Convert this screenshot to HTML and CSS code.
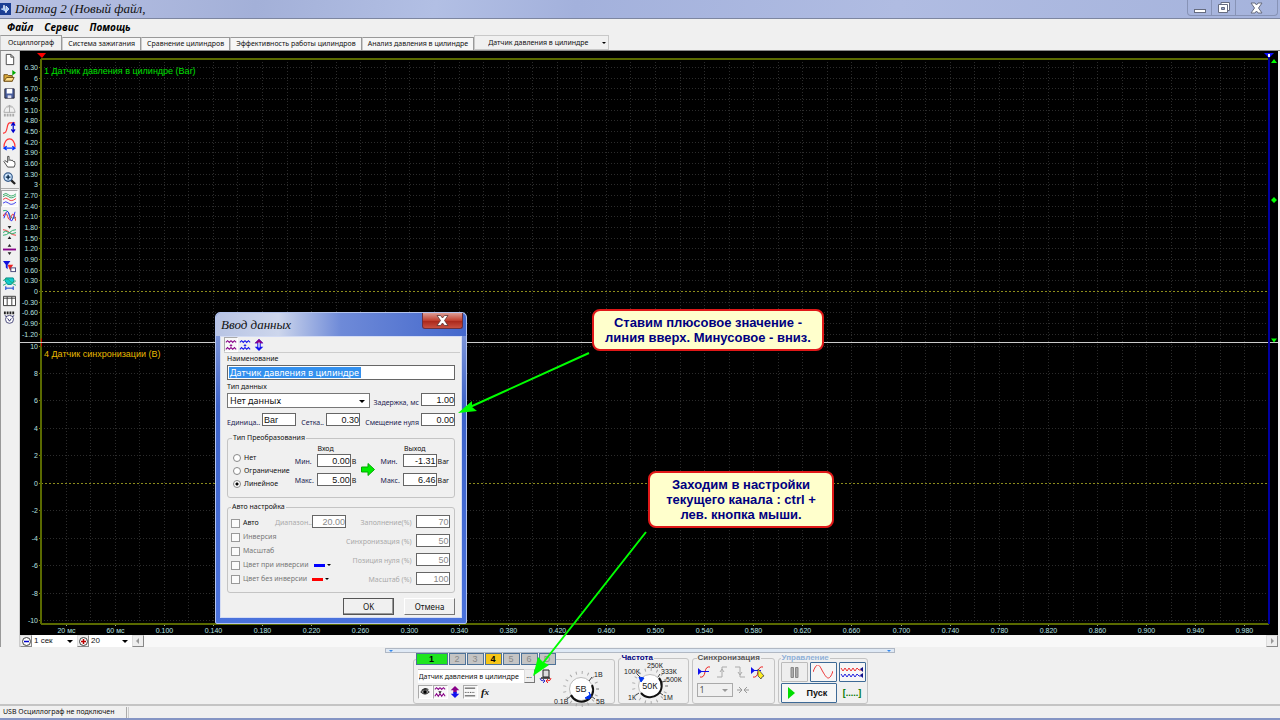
FILE: index.html
```html
<!DOCTYPE html>
<html lang="ru">
<head>
  <meta charset="UTF-8" />
  <meta name="viewport" content="width=device-width, initial-scale=1.0">
  <title>Diamag 2</title>
  <link rel="stylesheet" href="styles.css">
</head>
<body>
  <header class="titlebar">
    <svg class="app-icon" width="11" height="12" viewBox="0 0 11 12"><rect width="11" height="12" fill="#1c3f94"/><path d="M1 6h2l1-4 2 8V3l3 3-3 3" fill="#9cc8ff" stroke="#fff" stroke-width=".7"/></svg>
    <h1>Diamag 2 (Новый файл,</h1>
    <div class="window-buttons">
      <button aria-label="Свернуть"><svg width="14" height="12" viewBox="0 0 14 12"><rect x="1.500" y="7.500" width="11" height="3" fill="#fff" stroke="#666c80"/></svg></button>
      <button aria-label="Развернуть"><svg width="14" height="13" viewBox="0 0 14 13"><path d="M4 1.500h8.500v8H4z" fill="#fff" stroke="#666c80"/><path d="M1.500 3.500h9v8h-9z" fill="#fff" stroke="#666c80"/><path d="M4.500 6.500h3v2h-3z" fill="#9aa6cc" stroke="#666c80"/></svg></button>
      <button class="wide" aria-label="Закрыть"><svg width="13" height="12" viewBox="0 0 13 12"><path d="M1 1h4l1.500 2L8 1h4L8.500 6 12 11H8L6.500 9 5 11H1l3.500-5z" fill="#fff" stroke="#666c80"/></svg></button>
    </div>
  </header>

  <nav class="menu">
    <a href="#">Файл</a>
    <a href="#">Сервис</a>
    <a href="#">Помощь</a>
  </nav>

  <div class="tabs">
    <button class="tab active">Осциллограф</button>
    <button class="tab">Система зажигания</button>
    <button class="tab">Сравнение цилиндров</button>
    <button class="tab">Эффективность работы цилиндров</button>
    <button class="tab">Анализ давления в цилиндре</button>
    <span class="combo tab-combo">
      <select aria-label="Датчик"><option>Датчик давления в цилиндре</option></select>
    </span>
  </div>

  <main class="workspace">
    <div class="toolbar">
      <button aria-label="Новый"><svg viewBox="0 0 14 14"><path d="M3.500 1.500h5l3 3v8h-8z" fill="#fff" stroke="#444"/><path d="M8.500 1.500v3h3" fill="none" stroke="#444"/></svg></button>
      <button aria-label="Открыть"><svg viewBox="0 0 14 14"><path d="M1 12V5h4l1 1h4v6z" fill="#d9a93a" stroke="#6b4a12"/><path d="M1 12l3-4h8l-2 4z" fill="#ffe08a" stroke="#6b4a12"/><path d="M10 0l4 3-4 3z" fill="#0a0"/></svg></button>
      <button aria-label="Сохранить"><svg viewBox="0 0 14 14"><path d="M2 2h10v10H2z" fill="#4a5f9e" stroke="#223"/><path d="M4 2h6v5H4z" fill="#fff"/><path d="M5 9h4v3H5z" fill="#dde"/></svg></button>
      <button aria-label="Авто" disabled><svg viewBox="0 0 14 14"><path d="M1 9C2 4 4 2 7 2s5 2 6 7zM7 1v8M5 4l2-2 2 2" fill="none" stroke="#aaa"/><path d="M1 12h12" stroke="#aaa" stroke-width="3" stroke-dasharray="2 1"/></svg></button>
      <button aria-label="Амплитуда"><svg viewBox="0 0 14 14"><path d="M0 13c6 1 3-10 7-11h6" fill="none" stroke="#f33" stroke-width="1.300"/><path d="M11 2v10M9 5l2-3 2 3M9 9l2 3 2-3" fill="none" stroke="#00c" stroke-width="1.300"/></svg></button>
      <button aria-label="Период"><svg viewBox="0 0 14 14"><path d="M1 10C1 4 4 1 7 1s6 3 6 9" fill="none" stroke="#f33" stroke-width="1.300"/><path d="M1 11h12M4 9l-3 2 3 2M10 9l3 2-3 2" fill="none" stroke="#03f" stroke-width="1.300"/></svg></button>
      <button aria-label="Рука"><svg viewBox="0 0 14 14"><path d="M5 13L1 7l1-1 3 2V1.500h1.500V6l1-1 1 1 1.500-.500L11 7h1.500L13 10l-1 3z" fill="#fff" stroke="#333" stroke-width=".9"/></svg></button>
      <button aria-label="Увеличить"><svg viewBox="0 0 14 14"><path d="M8.500 8.500l4.500 4.500" stroke="#222" stroke-width="2.400"/><circle cx="5.500" cy="5.500" r="4.500" fill="#cfe7ff" stroke="#345a8a" stroke-width="1.300"/><path d="M3 5.500h5M5.500 3v5" stroke="#024" stroke-width="1.400"/></svg></button>
      <hr>
      <button class="pressed" aria-label="Все каналы"><svg viewBox="0 0 14 14" fill="none"><path d="M0 3q3-3 6 0t8-1M0 5q3-3 6 0t8-1" stroke="#3a6"/><path d="M0 8q3-3 6 0t8-1" stroke="#e33"/><path d="M0 12q3-3 6 0t8-1" stroke="#33e"/></svg></button>
      <button aria-label="Наложить"><svg viewBox="0 0 14 14" fill="none"><path d="M0 2q5-2 7 4t7 3" stroke="#2a7"/><path d="M0 8q3-7 5 0t4 0 5 5" stroke="#e22"/><path d="M1 10Q5-4 7 8T13 3" stroke="#22e"/></svg></button>
      <button aria-label="Сжать"><svg viewBox="0 0 14 14"><path d="M5 0h4L7 3zM5 14h4l-2-3z" fill="#222"/><path d="M0 4q4 0 7 3t7 3" fill="none" stroke="#e33"/><path d="M0 10q4 0 7-3t7-3M0 7q3-3 6 0t8 0" fill="none" stroke="#2a6"/></svg></button>
      <button aria-label="Разделить"><svg viewBox="0 0 14 14"><path d="M5 4l2-3 2 3zM5 10l2 3 2-3z" fill="#222"/><path d="M0 7h14" stroke="#808" stroke-width="2"/></svg></button>
      <button aria-label="Фильтр"><svg viewBox="0 0 14 14"><path d="M0 1h8L5 5v5L3 8V5z" fill="#11d"/><path d="M5 5h6L9 8v4L7 10z" fill="#e22"/><rect x="8.500" y="8.500" width="5" height="4" fill="#fff" stroke="#447"/></svg></button>
      <button aria-label="Развертка"><svg viewBox="0 0 14 14"><path d="M3 1h8l1 3-3 4H5L2 4z" fill="#1cc" stroke="#088"/><path d="M0 4q4-4 7 0t7 0M0 9l4-2M10 7l4 2" fill="none" stroke="#2a7"/><path d="M3 12h8M3 10v4M11 10v4" stroke="#03c"/></svg></button>
      <button aria-label="Таблица"><svg viewBox="0 0 14 14"><path d="M.500 2.500h13v10H.500z" fill="#fff" stroke="#333"/><path d="M1 4.500h12M4.500 3v9M9.500 3v9" stroke="#333"/></svg></button>
      <button aria-label="Авто настройка"><svg viewBox="0 0 14 14"><path d="M1 2h12" stroke="#222" stroke-width="3" stroke-dasharray="2 1"/><circle cx="7" cy="9" r="4.300" fill="#fff" stroke="#447"/><path d="M5 8l2 3 2-3M2 5l2 1M12 5l-2 1" fill="none" stroke="#226"/></svg></button>
    </div>

    <div class="scope-area">
      <div id="scope" class="scope"></div>
      <div class="scroll-row">
        <button class="mini" aria-label="Меньше"><svg width="9" height="9" viewBox="0 0 9 9"><circle cx="4.500" cy="4.500" r="4" fill="#fff" stroke="#444"/><path d="M2 4.500h5" stroke="#00c" stroke-width="1.500"/></svg></button>
        <span class="combo flat"><select aria-label="Время"><option>1 сек</option></select></span>
        <button class="mini" aria-label="Больше"><svg width="9" height="9" viewBox="0 0 9 9"><circle cx="4.500" cy="4.500" r="4" fill="#fff" stroke="#444"/><path d="M2 4.500h5M4.500 2v5" stroke="#b00" stroke-width="1.500"/></svg></button>
        <span class="combo flat step"><select aria-label="Шаг"><option>20</option></select></span>
        <button class="mini" aria-label="Влево"><svg width="4" height="6" viewBox="0 0 4 6"><path d="M3 0v6L0 3z" fill="#999"/></svg></button>
        <div class="track"></div>
        <button class="mini" aria-label="Вправо"><svg width="4" height="6" viewBox="0 0 4 6"><path d="M1 0v6l3-3z" fill="#999"/></svg></button>
      </div>
    </div>
  </main>

  <div class="splitter"><i></i><i></i></div>

  <section class="panel">
    <fieldset class="group channel-group">
      <legend class="channels">
        <button class="channel green">1</button>
        <button class="channel">2</button>
        <button class="channel">3</button>
        <button class="channel yellow">4</button>
        <button class="channel">5</button>
        <button class="channel">6</button>
        <button class="channel">D</button>
      </legend>
      <div class="channel-body">
        <div class="channel-left">
          <div class="sensor-row">
            <input class="sensor" type="text" value="Датчик давления в цилиндре" aria-label="Датчик канала">
            <button class="dots">...</button>
            <svg width="13" height="14" viewBox="0 0 13 14"><path d="M4 1h6v7H4z" fill="#ddd" stroke="#222"/><path d="M2 9h9" stroke="#222" stroke-width="1.500"/><path d="M1 9q0 3 4 3M4 10l2 2-2 2" stroke="#33c" fill="none"/><path d="M12 9q0 3-4 3M9 10l-2 2 2 2" stroke="#e22" fill="none"/></svg>
          </div>
          <div class="icon-row">
            <button class="pressed" aria-label="Показать"><svg viewBox="0 0 14 14"><path d="M2 7q5-6 10 0-5 5-10 0M3 5q4-4 8-1" fill="#999" stroke="#222"/><circle cx="7" cy="7" r="2"/></svg></button>
            <button class="pressed" aria-label="Сигнал"><svg viewBox="0 0 14 14" fill="none" stroke="#808"><path d="M1 4l2-2 2 2 2-2 2 2 2-2 2 2M1 12l2-3 2 3 2-3 2 3 2-3 2 3" stroke-width="1.200"/><path d="M5 6h4L7 9z" fill="#222" stroke="none"/></svg></button>
            <button aria-label="Сдвиг"><svg viewBox="0 0 14 14"><path d="M7 0l5 5H9v3H5V5H2z" fill="#808"/><path d="M7 14l5-5H9V7H5v2H2z" fill="#11e"/></svg></button>
            <button class="pressed" aria-label="Линии"><svg viewBox="0 0 14 14" stroke="#222"><path d="M1 2.500h12M1 11.500h12"/><path d="M1 7.500h12" stroke-dasharray="1 1"/></svg></button>
            <button class="fx" aria-label="Функция">f<small>x</small></button>
          </div>
        </div>
        <div class="dial dial-volt">
          <svg viewBox="0 0 60 46">
            <circle cx="28" cy="28" r="16.500" class="ticks"/>
            <circle cx="28" cy="28" r="11.500" class="knob"/>
            <path d="M18 34A11.500 11.500 0 0 0 39 24" class="knob-shade"/>
            <path d="M32 37l5-3-1-3 2 4-2 3z" class="pointer"/>
            <path d="M14 38l4-3M42 38l-4-3M39 16l-3 4" class="leads"/>
            <text x="28" y="31" class="dial-value">5В</text>
            <text x="41" y="16">1В</text><text x="43" y="43">5В</text><text x="1" y="43">0.1В</text>
          </svg>
        </div>
      </div>
    </fieldset>

    <fieldset class="group freq-group">
      <legend>Частота</legend>
      <div class="dial">
        <svg viewBox="0 0 66 43">
          <circle cx="31" cy="24" r="16.500" class="ticks"/>
          <circle cx="31" cy="24" r="11.500" class="knob"/>
          <path d="M22 31A11.500 11.500 0 0 0 40 16" class="knob-shade"/>
          <path d="M20 15l5 1-3 4z" class="pointer"/>
          <path d="M18 12l3 3M41 12l-2 3M47 19l-4 1M17 33l3-2M44 33l-3-2" class="leads"/>
          <text x="31" y="27" class="dial-value">50К</text>
          <text x="28" y="6">250К</text><text x="5" y="12">100К</text><text x="42" y="12">333К</text><text x="47" y="20">500К</text><text x="9" y="38">1К</text><text x="44" y="38">1М</text>
        </svg>
      </div>
    </fieldset>

    <fieldset class="group sync-group">
      <legend>Синхронизация</legend>
      <div class="sync-icons">
        <button aria-label="Уровень"><svg viewBox="0 0 14 14"><path d="M3 12q4 1 5-5t5-5" fill="none" stroke="#e22"/><path d="M1 3v7l4-3.500z" fill="#11e"/><path d="M1 6.500h11" stroke="#11e"/></svg></button>
        <button aria-label="Фронт" disabled><svg viewBox="0 0 14 14"><path d="M2 12h5V2h5M5 7l2-3 2 3" fill="none" stroke="#aaa"/></svg></button>
        <button aria-label="Спад" disabled><svg viewBox="0 0 14 14"><path d="M2 2h5v10h5M5 7l2 3 2-3" fill="none" stroke="#aaa"/></svg></button>
        <button aria-label="Выбор"><svg viewBox="0 0 14 14"><path d="M2 12q4 1 5-5t5-5" fill="none" stroke="#e22"/><path d="M0 2v7l4-3.500z" fill="#11e"/><path d="M1 5.500h9" stroke="#11e"/><path d="M7 4l6 7-2 1-1 2-3-3z" fill="#fe2" stroke="#333" stroke-width=".7"/></svg></button>
      </div>
      <div class="sync-row">
        <span class="combo disabled"><select aria-label="Канал синхронизации" disabled><option>1</option></select></span>
        <svg width="12" height="8" viewBox="0 0 12 8"><path d="M0 4h5M2 1l3 3-3 3M12 4H7M10 1L7 4l3 3" fill="none" stroke="#999"/></svg>
      </div>
    </fieldset>

    <fieldset class="group control-group">
      <legend>Управление</legend>
      <div class="controls">
        <button class="key off" aria-label="Пауза"><svg width="9" height="11" viewBox="0 0 9 11"><path d="M1 .500h2.500v10H1zM5.500.500H8v10H5.500z" fill="#aaa" stroke="#888"/></svg></button>
        <button class="key" aria-label="Синус"><svg width="20" height="14" viewBox="0 0 20 14"><path d="M0 7C5-6 7 2 10 7s6 11 10-1" fill="none" stroke="#e33"/></svg></button>
        <button class="key" aria-label="Поток"><svg width="24" height="14" viewBox="0 0 24 14" fill="none"><path d="M1 3l2 3 2-3 2 3 2-3 2 3 2-3 2 3 2-3 2 2h3" stroke="#e33"/><path d="M1 9l2 3 2-3 2 3 2-3 2 3 2-3 2 3 2-3 2 2h3" stroke="#22d"/><path d="M23 2v5l-3-3zM23 8v5l-3-3z" fill="#118"/></svg></button>
        <button class="key start"><svg width="8" height="12" viewBox="0 0 8 12"><path d="M0 0l7 6-7 6z" fill="#0d0"/></svg>Пуск</button>
        <span class="brackets">[.....]</span>
      </div>
    </fieldset>
  </section>

  <footer class="statusbar">
    <span class="status-text">USB Осциллограф не подключен</span>
    <span class="status-rest"></span>
  </footer>
  <div class="window-edge"></div>

  <form class="dialog">
    <div class="dialog-title">
      <h2>Ввод данных</h2>
      <button type="button" class="dialog-close" aria-label="Закрыть"><svg width="13" height="11" viewBox="0 0 13 11"><path d="M1 .500h3.500l2 2.500 2-2.500H12L8.500 5.500l3.500 5H8.500l-2-2.500-2 2.500H1l3.500-5z" fill="#fff" stroke="#5a3434" stroke-width=".8"/></svg></button>
    </div>
    <div class="dialog-body">
      <div class="dialog-tools">
        <button type="button" class="pressed" aria-label="Сигнал"><svg viewBox="0 0 14 14" fill="none" stroke="#808"><path d="M1 4l2-2 2 2 2-2 2 2 2-2 2 2M1 12l2-2 2 2 2-2 2 2 2-2 2 2" stroke-width="1.200"/><path d="M7 6v3M5.500 7.500h3"/></svg></button>
        <button type="button" aria-label="Сигнал 2"><svg viewBox="0 0 14 14" fill="none" stroke="#11e"><path d="M1 4l2-2 2 2 2-2 2 2 2-2 2 2M1 12l2-2 2 2 2-2 2 2 2-2 2 2" stroke-width="1.200"/><path d="M7 6v3M5.500 7.500h3"/></svg></button>
        <button type="button" aria-label="Сдвиг"><svg viewBox="0 0 14 14"><path d="M7 0l5 5H9v4h3l-5 5-5-5h3V5H2z" fill="#11e"/><path d="M7 0l5 5H2z" fill="#808"/><path d="M7 4v6" stroke="#fff" stroke-width="1.500"/></svg></button>
      </div>

      <label class="caption" for="name">Наименование</label>
      <div class="name-field"><input id="name" type="text" value=""><mark>Датчик давления в цилиндре</mark></div>

      <label class="caption" for="type">Тип данных</label>
      <div class="row type-row">
        <span class="combo"><select id="type"><option>Нет данных</option></select></span>
        <label class="blue push" for="delay">Задержка, мс</label>
        <input class="num" id="delay" type="text" value="1.00">
      </div>
      <div class="row unit-row">
        <label class="blue" for="unit">Единица..</label>
        <input class="unit" id="unit" type="text" value="Bar">
        <label class="blue push" for="grid">Сетка..</label>
        <input class="num" id="grid" type="text" value="0.30">
        <label class="blue push" for="zero">Смещение нуля</label>
        <input class="num" id="zero" type="text" value="0.00">
      </div>

      <fieldset class="convert">
        <legend>Тип Преобразования</legend>
        <div class="radios">
          <label><input type="radio" name="conv">Нет</label>
          <label><input type="radio" name="conv">Ограничение</label>
          <label><input type="radio" name="conv" checked>Линейное</label>
        </div>
        <div class="range">
          <span class="head">Вход</span>
          <label class="blue" for="inmin">Мин.</label><input class="num" id="inmin" type="text" value="0.00"><span>В</span>
          <label class="blue" for="inmax">Макс.</label><input class="num" id="inmax" type="text" value="5.00"><span>В</span>
        </div>
        <svg class="go" width="14" height="13" viewBox="0 0 14 13"><path d="M.500 4H7V.500l6.500 6-6.500 6V9H.500z" fill="#0e0" stroke="#0a0"/></svg>
        <div class="range">
          <span class="head">Выход</span>
          <label class="blue" for="outmin">Мин.</label><input class="num" id="outmin" type="text" value="-1.31"><span>Bar</span>
          <label class="blue" for="outmax">Макс.</label><input class="num" id="outmax" type="text" value="6.46"><span>Bar</span>
        </div>
      </fieldset>

      <fieldset class="auto">
        <legend>Авто настройка</legend>
        <div class="checks">
          <div class="check-row">
            <label class="dark"><input type="checkbox">Авто</label>
            <label class="dim push" for="span">Диапазон..</label>
            <input class="num" id="span" type="text" value="20.00" disabled>
          </div>
          <label><input type="checkbox" disabled>Инверсия</label>
          <label><input type="checkbox" disabled>Масштаб</label>
          <label><input type="checkbox" disabled>Цвет при инверсии<i class="swatch blue-line"></i></label>
          <label><input type="checkbox" disabled>Цвет без инверсии<i class="swatch red-line"></i></label>
        </div>
        <div class="percents">
          <label for="fill">Заполнение(%)</label><input class="num" id="fill" type="text" value="70" disabled>
          <label for="sync">Синхронизация (%)</label><input class="num" id="sync" type="text" value="50" disabled>
          <label for="pos">Позиция нуля (%)</label><input class="num" id="pos" type="text" value="50" disabled>
          <label for="scale">Масштаб (%)</label><input class="num" id="scale" type="text" value="100" disabled>
        </div>
      </fieldset>

      <div class="dialog-buttons">
        <button type="button" class="default">OK</button>
        <button type="button">Отмена</button>
      </div>
    </div>
  </form>

  <div class="callout callout-zero">Ставим плюсовое значение - линия вверх. Минусовое - вниз.</div>
  <div class="callout callout-channel">Заходим в настройки текущего канала : ctrl + лев. кнопка мыши.</div>
  <svg class="pointers">
    <path d="M589 353L470 407M646 532L543 663" stroke="#0f0" stroke-width="2"/>
    <path d="M458 413l14-12 0 6 5 4zM533 676l5-19 5 5 6 3z" fill="#0f0"/>
  </svg>

  <script src="scope.js"></script>
</body>
</html>
```
FILE: styles.css
```css
* {
  box-sizing: border-box;
}

body {
  margin: 0;
  min-height: 100vh;
  display: flex;
  flex-direction: column;
  position: relative;
  background: #f0f0f0;
  color: #111;
  font-family: "Noto Sans", "Liberation Sans", sans-serif;
  font-size: 7px;
  line-height: 10px;
}

button,
input,
select {
  font: inherit;
  color: inherit;
  margin: 0;
  padding: 0;
  border: 0;
  border-radius: 0;
  background: none;
}

button {
  display: flex;
  align-items: center;
  justify-content: center;
}

button,
label {
  white-space: nowrap;
}

svg {
  display: block;
  flex: none;
}

fieldset {
  margin: 0;
  padding: 0;
  min-width: 0;
  border: 1px solid #c4c4c4;
  border-radius: 3px;
}

/* title bar */
.titlebar {
  height: 19px;
  display: flex;
  align-items: center;
  padding: 0 2px 0 0;
  gap: 4px;
  background: linear-gradient(100deg, #b9c2e4, #a3b0d8 20%, #b2bfe4 34%, #a3b1dc 45%, #b0bce2 70%, #a5b3dc);
  border-bottom: 1px solid #7d86a0;
}

.titlebar h1 {
  margin: 0;
  flex: 1;
  font: italic 13px/18px "Liberation Serif", serif;
}

.window-buttons {
  display: flex;
  align-self: flex-start;
  height: 16px;
  border: 1px solid #8793b6;
  border-top: 0;
  border-radius: 0 0 4px 4px;
}

.window-buttons button {
  width: 24px;
  border-right: 1px solid #8793b6;
}

.window-buttons .wide {
  width: 41px;
  border: 0;
}

/* menu and tabs */
.menu {
  height: 16px;
  display: flex;
  gap: 11px;
  padding: 0 7px;
}

.menu a {
  color: #000;
  text-decoration: none;
  font: italic bold 10px/16px "Open Sans", sans-serif;
}

.tabs {
  height: 16px;
  display: flex;
  align-items: flex-end;
  border-bottom: 1px solid #8a8a8a;
}

.tab {
  height: 13px;
  padding: 0 5px;
  background: #f6f6f6;
  border: 1px solid #999;
  border-bottom: 0;
  border-left-color: #ccc;
}

.tab.active {
  height: 15px;
  padding: 0 7px;
  background: #f0f0f0;
}

.combo {
  position: relative;
  display: flex;
  background: #fff;
  border: 1px solid #777;
}

.combo select {
  appearance: none;
  flex: 1;
  width: 100%;
  padding: 0 2px;
}

.combo::after {
  content: "";
  position: absolute;
  right: 4px;
  top: 50%;
  margin-top: -1px;
  border: 3px solid transparent;
  border-top-color: #000;
  border-bottom: 0;
}

.tab-combo {
  width: 135px;
  height: 15px;
  background: #f0f0f0;
  border-color: #c8c8c8;
}

.tab-combo::after {
  right: 2px;
  border-width: 2px 2px 0;
}

.tab-combo select {
  padding-left: 13px;
}

/* workspace */
.workspace {
  flex: 1;
  display: flex;
  padding-right: 2px;
  border-left: 1px solid #999;
}

.toolbar {
  width: 19px;
  border-right: 1px solid #ccc;
}

.toolbar button {
  width: 17px;
  height: 17px;
}

.toolbar svg {
  width: 13px;
  height: 13px;
}

.toolbar hr {
  margin: 1px 0;
  border: 0;
  border-top: 1px solid #aaa;
}

.pressed {
  background: #f8f8f8;
  border: 1px solid #aaa;
  border-right-color: #fff;
  border-bottom-color: #fff;
}

.scope-area {
  flex: 1;
  min-width: 0;
  display: flex;
  flex-direction: column;
}

.scope {
  flex: 1;
  min-height: 500px;
  position: relative;
  background: #000;
}

.scope svg {
  position: absolute;
  inset: 0;
  width: 100%;
  height: 100%;
}

.scope text {
  font: 7px "Liberation Sans", sans-serif;
  fill: #b8e0e0;
}

.scope .channel-name {
  font-size: 9px;
}

.scope .grid {
  stroke: #2c2c2c;
  stroke-dasharray: 1 2;
}

.scope .zero {
  stroke: #8c8c1c;
  stroke-dasharray: 2 2;
}

.scroll-row {
  height: 12px;
  display: flex;
  background: #f8f8f8;
  font-family: "Liberation Sans", sans-serif;
  font-size: 8px;
}

.scroll-row .combo {
  width: 45px;
  border: 0;
}

.scroll-row .step {
  width: 43px;
}

.mini {
  width: 12px;
  background: #eee;
  border: 1px solid #ddd;
  border-right-color: #888;
  border-bottom-color: #888;
}

.track {
  flex: 1;
}

.splitter {
  width: 510px;
  max-width: 100%;
  height: 5px;
  margin: 1px auto 0;
  display: flex;
  align-items: center;
  justify-content: space-between;
  background: #dfe9f5;
  border: 1px solid #b0b8c4;
}

.splitter i {
  border: 2px solid transparent;
  border-top-color: #38e;
  border-bottom: 0;
  margin: 0 3px;
}

/* bottom panel */
.panel {
  height: 53px;
  display: flex;
  justify-content: center;
  align-items: flex-end;
  gap: 3px;
  border-bottom: 2px solid #c4c4c4;
}

.group {
  height: 50px;
}

.group legend {
  margin-left: 2px;
  padding: 0 1px;
  font: bold 8px/8px "Liberation Sans", sans-serif;
}

.channel-group {
  width: 202px;
  height: 51px;
}

.group .channels {
  display: flex;
  gap: 1px;
  padding: 0;
}

.channel {
  width: 17px;
  height: 12px;
  background: #c4c4c4;
  border: 1px solid #4e7298;
  color: #888;
  font-size: 9px;
  font-weight: normal;
}

.channel.green {
  width: 32px;
  background: #1ee51e;
  color: #000;
  font-weight: bold;
}

.channel.yellow {
  background: #f5c518;
  color: #000;
  font-weight: bold;
}

.channel-body {
  display: flex;
}

.channel-left {
  width: 139px;
  padding: 4px 0 0 4px;
}

.sensor-row,
.icon-row {
  display: flex;
  height: 14px;
  margin-bottom: 2px;
}

.sensor {
  width: 106px;
  flex: none;
  padding: 0 1px;
  background: #fff;
  border-top: 1px solid #bbb;
}

.dots {
  width: 11px;
  margin-right: 4px;
  background: #eee;
  border: 1px solid #ddd;
  border-right-color: #777;
  border-bottom-color: #777;
}

.icon-row button {
  width: 15px;
}

.icon-row svg {
  width: 12px;
  height: 12px;
}

.icon-row .fx {
  font: italic bold 11px "Liberation Serif", serif;
}

.dial {
  overflow: visible;
}

.dial svg {
  width: 66px;
  height: 43px;
  overflow: visible;
}

.dial-volt svg {
  width: 60px;
  height: 46px;
  margin-top: -4px;
}

.dial text {
  font: 7px "Liberation Sans", sans-serif;
  fill: #222;
}

.dial .dial-value {
  font-size: 9px;
  text-anchor: middle;
}

.ticks {
  fill: none;
  stroke: #aaa;
  stroke-width: 3;
  stroke-dasharray: 1 5;
}

.knob {
  fill: #fff;
  stroke: #bbb;
}

.knob-shade {
  fill: none;
  stroke: #111;
  stroke-width: 2;
}

.pointer {
  fill: #03e;
  stroke: #03e;
}

.leads {
  stroke: #444;
}

.freq-group {
  width: 71px;
}

.freq-group legend {
  color: #000080;
}

.sync-group {
  width: 83px;
  padding-left: 4px;
}

.group.sync-group legend,
.group.control-group legend {
  margin-left: 0;
  color: #555;
}

.sync-icons {
  display: flex;
  gap: 4px;
  padding-top: 3px;
}

.sync-icons svg {
  width: 14px;
  height: 14px;
}

.sync-row {
  display: flex;
  align-items: center;
  gap: 4px;
  padding-top: 4px;
}

.sync-row .combo {
  width: 36px;
  height: 14px;
  font-size: 9px;
}

.combo.disabled {
  background: #f0f0f0;
  border-color: #aaa;
}

.combo.disabled::after {
  border-top-color: #999;
}

.combo select:disabled {
  opacity: 1;
  color: #555;
}

.control-group {
  width: 90px;
  padding-left: 2px;
}

.group.control-group legend {
  color: #8fb0d8;
}

.controls {
  display: grid;
  grid-template-columns: 27px 27px 27px;
  gap: 1px 2px;
}

.key {
  height: 20px;
  background: #f6f6f6;
  border: 1px solid #3e6a96;
  border-radius: 1px;
}

.key.off {
  background: #eee;
  border-color: #bbb;
}

.start {
  grid-column: span 2;
  justify-content: flex-start;
  gap: 11px;
  padding-left: 6px;
  font: bold 9px "Liberation Sans", sans-serif;
}

.brackets {
  align-self: center;
  justify-self: center;
  color: #070;
  font: bold 9px "Liberation Sans", sans-serif;
}

/* status bar */
.statusbar {
  height: 12px;
  display: flex;
  gap: 1px;
  padding-top: 1px;
}

.status-text {
  width: 127px;
  padding-left: 3px;
  white-space: nowrap;
  border-right: 1px solid #aaa;
}

.status-rest {
  flex: 1;
  border-left: 1px solid #ccc;
}

.window-edge {
  height: 2px;
  background: #8595c4;
}

/* settings dialog */
.dialog {
  position: absolute;
  left: 215px;
  top: 312px;
  width: 252px;
  padding: 0 4px 5px;
  background: linear-gradient(#90a4dc, #3c62c8 30%, #4a72dc);
  border: 1px solid #b4c4ee;
  border-radius: 5px 5px 2px 2px;
}

.dialog-title {
  height: 23px;
  margin: 0 -4px;
  padding: 0 3px 0 5px;
  display: flex;
  align-items: center;
  justify-content: space-between;
  border-radius: 5px 5px 0 0;
  background: linear-gradient(90deg, #b8c4e4, #cdd6ec 25%, #6e8ad8 50%, #4468cc);
}

.dialog-title h2 {
  margin: 0;
  font: italic 13px/22px "Liberation Serif", serif;
}

.dialog-close {
  align-self: flex-start;
  width: 41px;
  height: 16px;
  background: linear-gradient(#dc9c94, #c04030 50%, #a82418 50%, #c85040);
  border: 1px solid #6a3040;
  border-top: 0;
  border-radius: 0 0 3px 3px;
}

.dialog-body {
  padding: 0 6px 2px;
  background: #f0f0f0;
  border: 1px solid #d4dcf4;
}

.dialog-tools {
  display: flex;
  margin: 0 -5px 1px -3px;
  border-bottom: 1px solid #ccc;
}

.dialog-tools button {
  width: 14px;
  height: 15px;
}

.dialog-tools svg {
  width: 12px;
  height: 12px;
}

.caption {
  display: block;
  height: 11px;
}

.dialog input[type="text"] {
  height: 13px;
  background: #fff;
  border: 1px solid #666;
}

.name-field {
  position: relative;
  margin-bottom: 2px;
}

.dialog .name-field input {
  display: block;
  width: 100%;
  height: 15px;
}

.name-field mark {
  position: absolute;
  left: 2px;
  top: 2px;
  padding: 0 2px 0 1px;
  color: #fff;
  background: #3390ee;
  font-size: 9px;
  line-height: 11px;
}

.row {
  display: flex;
  align-items: flex-start;
}

.blue {
  color: #1c1c50;
}

.num,
.unit {
  width: 34px;
  flex: none;
}

.dialog .num,
.dialog .unit {
  font: 9px "Liberation Sans", sans-serif;
}

.num {
  text-align: right;
}

.type-row .combo {
  width: 143px;
  height: 15px;
  font-size: 9px;
}

.unit-row {
  height: 15px;
  margin: 5px 0;
}

.dialog .unit {
  height: 15px;
  padding-left: 1px;
}

.push {
  margin-left: auto;
}

.unit-row .blue,
.type-row .blue {
  padding: 5px 2px 0 0;
}

.convert {
  height: 65px;
  padding: 0 5px;
  display: flex;
  justify-content: space-between;
  align-items: flex-start;
}

.convert legend,
.auto legend {
  margin-left: -1px;
  padding: 0 1px;
}

.auto legend {
  margin-left: 0;
}

.radios {
  display: flex;
  flex-direction: column;
  gap: 3px;
  padding-top: 10px;
}

.radios label,
.checks label {
  display: flex;
  align-items: center;
  gap: 3px;
}

.radios input {
  appearance: none;
  width: 8px;
  height: 8px;
  background: #fff;
  border: 1px solid #888;
  border-radius: 50%;
}

.radios input:checked {
  background: radial-gradient(#000 0 1px, #fff 2px);
}

.range {
  display: grid;
  grid-template-columns: 21px 34px auto;
  align-items: end;
  column-gap: 1px;
  row-gap: 6px;
  padding-top: 1px;
}

.range .head {
  grid-column: 1 / -1;
  text-align: center;
  height: 10px;
  margin-bottom: -6px;
}

.go {
  margin-top: 20px;
}

.auto {
  height: 91px;
  margin-top: 4px;
  padding: 3px 8px 0 3px;
  display: flex;
  justify-content: space-between;
  color: #777;
}

.auto legend,
.auto .dark {
  color: #111;
}

.checks {
  width: 115px;
  flex: none;
  display: flex;
  flex-direction: column;
  gap: 4px;
}

.check-row {
  display: flex;
  align-items: flex-end;
  height: 13px;
}

.checks input[type="checkbox"] {
  appearance: none;
  width: 9px;
  height: 9px;
  background: #fbfbfb;
  border: 1px solid #999;
}

.auto input[type="text"] {
  color: #888;
}

.dim,
.percents {
  color: #aaa;
}

.percents {
  display: grid;
  grid-template-columns: auto 34px;
  grid-auto-rows: 13px;
  gap: 6px 4px;
  text-align: right;
  align-items: end;
}

.swatch {
  position: relative;
  width: 11px;
  height: 3px;
  margin-left: 2px;
}

.swatch::after {
  content: "";
  position: absolute;
  left: 13px;
  top: 0;
  border: 2px solid transparent;
  border-top-color: #000;
  border-bottom: 0;
}

.blue-line {
  background: #00f;
}

.red-line {
  background: #f00;
}

.dialog-buttons {
  display: flex;
  justify-content: flex-end;
  gap: 10px;
  margin-top: 5px;
}

.dialog-buttons button {
  width: 51px;
  height: 17px;
  font-size: 8px;
  border: 1px solid #fff;
  border-right-color: #777;
  border-bottom-color: #777;
}

.dialog-buttons .default {
  border: 1px solid #555;
  box-shadow: inset -1px -1px #999;
}

/* callouts */
.callout {
  position: absolute;
  padding: 4px 8px;
  background: #ffffcc;
  border: 2px solid #e01818;
  border-radius: 8px;
  color: #000080;
  text-align: center;
  font: bold 13px/15px "Liberation Sans", sans-serif;
}

.callout-zero {
  left: 592px;
  top: 309px;
  width: 232px;
}

.callout-channel {
  left: 648px;
  top: 471px;
  width: 186px;
}

.pointers {
  position: absolute;
  inset: 0;
  width: 100%;
  height: 100%;
  pointer-events: none;
}
```
FILE: scope.js
```javascript
const scope = document.getElementById("scope");

// margins around the plot
const LEFT = 21;
const RIGHT = 9;
const TOP = 8;
const BOTTOM = 11;

function line(x1, y1, x2, y2, attrs) {
  return `<line x1="${x1}" y1="${y1}" x2="${x2}" y2="${y2}" ${attrs}/>`;
}

function label(x, y, text, attrs = "") {
  return `<text x="${x}" y="${y}" ${attrs}>${text}</text>`;
}

function axisRow(x, y, text, isZero) {
  const px = Math.round(y) + 0.5;
  return line(LEFT, px, x, px, `class="${isZero ? "zero" : "grid"}"`)
    + line(LEFT - 2, px, LEFT, px, 'stroke="#7a8c00"')
    + label(LEFT - 3, px + 2, text, 'text-anchor="end"');
}

function drawScope() {
  const w = scope.clientWidth;
  const h = scope.clientHeight;
  const right = w - RIGHT;
  const bottom = h - BOTTOM;
  const split = Math.round(TOP + (bottom - TOP) / 2) + 0.5;
  let out = "";

  // time axis, one grid line each 20 ms
  for (let i = 1; i < 50; i++) {
    const x = Math.round(LEFT + (right - LEFT) * i / 50) + 0.5;
    out += line(x, TOP + 3, x, bottom, 'class="grid"');
    if (i % 2 === 1) {
      const text = i < 4 ? `${i * 20} мс` : (i * 0.02).toFixed(3);
      out += line(x, bottom, x, bottom + 2, 'stroke="#9a9"');
      out += label(x, h - 2, text, 'text-anchor="middle"');
    }
  }

  // channel 1
  const unit1 = (split - TOP - 17) / 7.5;
  for (let i = 21; i >= -4; i--) {
    const v = i * 0.3;
    const text = i % 10 === 0 ? v.toFixed(0) : v.toFixed(2);
    out += axisRow(right, TOP + 8 + (6.3 - v) * unit1, text, i === 0);
  }

  // channel 4
  const unit4 = (bottom - split - 7) / 20;
  for (let v = 10; v >= -10; v -= 2) {
    out += axisRow(right, split + 3 + (10 - v) * unit4, v, v === 0);
  }

  const olive = 'stroke="#5a6a00" stroke-width="2"';
  out += line(LEFT, TOP, right, TOP, olive);
  out += line(LEFT, bottom, right, bottom, olive);
  out += line(LEFT, TOP, LEFT, bottom, olive);
  out += line(LEFT + 0.5, split - 4, LEFT + 0.5, split + 4, 'stroke="#c00"');
  out += line(0, split, w, split, 'stroke="#ccc"');
  out += line(right, 5, right, bottom, 'stroke="#0000a0" stroke-width="2"');
  out += `<path d="M${LEFT - 4} 2h9l-4 5z" fill="#f00"/>`;
  out += `<path d="M${right - 5} 2h10l-5 5z" fill="#11f"/>`;
  out += line(right, 3, right, 6, 'stroke="#fff" stroke-width="2"');
  out += `<path d="M${w - 7} 12h6l-3-4zM${w - 7} 149l3-3 3 3-3 3zM${w - 7} ${split - 4}h6l-3 4z" fill="#0f0"/>`;
  out += label(LEFT + 3, 23, "1 Датчик давления в цилиндре (Bar)", 'class="channel-name" style="fill:#00e000"');
  out += label(LEFT + 3, split + 14, "4 Датчик синхронизации (В)", 'class="channel-name" style="fill:#e8b800"');

  scope.innerHTML = `<svg>${out}</svg>`;
}

window.addEventListener("resize", drawScope);
drawScope();
```
